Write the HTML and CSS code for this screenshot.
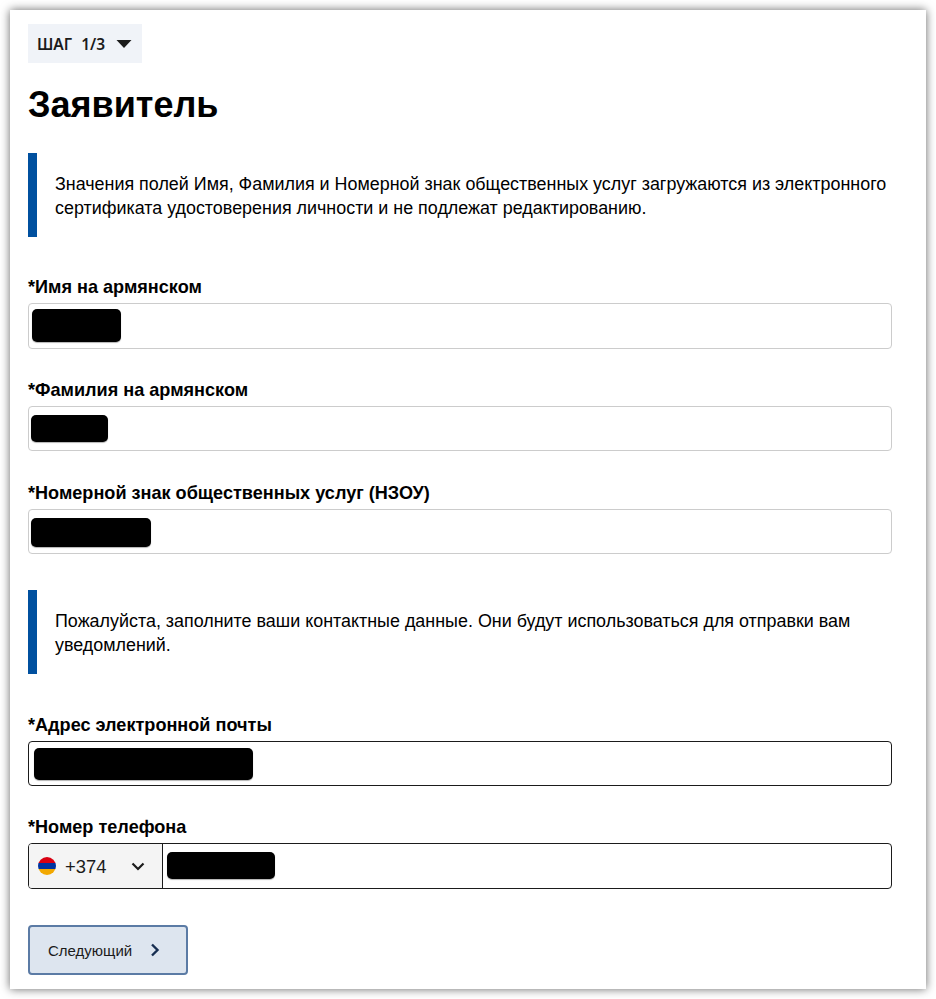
FILE: index.html
```html
<!DOCTYPE html>
<html lang="ru">
<head>
<meta charset="utf-8">
<title>Заявитель</title>
<link rel="stylesheet" href="styles.css">
</head>
<body>
<main class="card">
  <button class="step" type="button">
    <span>ШАГ</span><span>1/3</span>
    <svg class="step-caret" width="16" height="8" viewBox="0 0 16 8"><path d="M0.5 0H15.5L8 8Z" fill="#1b1b1b"/></svg>
  </button>
  <h1 class="title">Заявитель</h1>
  <div class="notice notice-first">Значения полей Имя, Фамилия и Номерной знак общественных услуг загружаются из электронного сертификата удостоверения личности и не подлежат редактированию.</div>
  <div class="field field-first">
    <label class="label">*Имя на армянском</label>
    <div class="input input-tall"><span class="mask mask-a"></span></div>
  </div>
  <div class="field">
    <label class="label">*Фамилия на армянском</label>
    <div class="input"><span class="mask mask-b"></span></div>
  </div>
  <div class="field field-wide">
    <label class="label">*Номерной знак общественных услуг (НЗОУ)</label>
    <div class="input"><span class="mask mask-c"></span></div>
  </div>
  <div class="notice notice-second">Пожалуйста, заполните ваши контактные данные. Они будут использоваться для отправки вам уведомлений.</div>
  <div class="field field-contact">
    <label class="label">*Адрес электронной почты</label>
    <div class="input input-active"><span class="mask mask-d"></span></div>
  </div>
  <div class="field">
    <label class="label">*Номер телефона</label>
    <div class="input input-active input-tall phone">
      <div class="code">
        <svg class="flag" width="18" height="18" viewBox="0 0 18 18">
          <defs><clipPath id="round"><circle cx="9" cy="9" r="9"/></clipPath></defs>
          <g clip-path="url(#round)">
            <rect width="18" height="6" fill="#d90012"/>
            <rect y="6" width="18" height="6" fill="#0033a0"/>
            <rect y="12" width="18" height="6" fill="#f2a800"/>
          </g>
        </svg>
        <span class="code-text">+374</span>
        <svg class="code-caret" width="14" height="9" viewBox="0 0 14 9"><path d="M1.5 1.5L7 7L12.5 1.5" fill="none" stroke="#1b1b1b" stroke-width="2.2"/></svg>
      </div>
      <span class="mask mask-e"></span>
    </div>
  </div>
  <button class="next" type="button">
    <span>Следующий</span>
    <svg width="10" height="14" viewBox="0 0 10 14"><path d="M2 1.5L7.5 7L2 12.5" fill="none" stroke="#162e51" stroke-width="2.4"/></svg>
  </button>
</main>
</body>
</html>
```

FILE: styles.css
```css
* { box-sizing: border-box; }
html, body { margin: 0; background: #fff; }
body {
  padding: 10px;
  height: 999px;
  overflow: hidden;
  font-family: "Liberation Sans", Arial, sans-serif;
  color: #000;
}
.card {
  width: 916px;
  height: 979px;
  padding: 14px 34px 0 18px;
  background: #fff;
  box-shadow: 0 0 9px rgba(0, 0, 0, 0.6);
}
.step {
  display: flex;
  align-items: center;
  gap: 9px;
  width: 114px;
  height: 39px;
  padding: 0 0 0 9px;
  border: 0;
  background: #f0f3f8;
  color: #1b1b1b;
  font: 600 15.5px "Noto Sans", "Open Sans", sans-serif;
}
.step-caret { margin-left: 2px; }
.title {
  margin: 21px 0 0;
  font-size: 36px;
  line-height: 42px;
  font-weight: 700;
}
.notice {
  height: 84px;
  padding: 19px 0 0 18px;
  border-left: 9px solid #00509f;
  font-size: 17.92px;
  line-height: 24px;
}
.notice-first { margin-top: 27px; }
.notice-second { margin-top: 36px; }
.field { margin-top: 31px; }
.field-wide { margin-top: 32px; }
.field-first { margin-top: 40px; }
.field-contact { margin-top: 41px; }
.label {
  display: block;
  height: 20px;
  margin-bottom: 6px;
  font-size: 18.1px;
  line-height: 20px;
  font-weight: 700;
}
.input {
  display: flex;
  align-items: center;
  height: 45px;
  border: 1px solid #ccc;
  border-radius: 4px;
  background: #fff;
}
.input-tall { height: 46px; }
.input-active { border-color: #1b1b1b; }
.mask {
  display: block;
  background: #000;
  border-radius: 5px;
  box-shadow: 0 1px 1px rgba(0, 0, 0, 0.3);
}
.mask-a { width: 89px; height: 33px; margin: 0 0 2px 3px; }
.mask-b { width: 77px; height: 27px; margin-left: 2px; }
.mask-c { width: 120px; height: 29px; margin: 2px 0 0 2px; }
.mask-d { width: 219px; height: 32px; margin-left: 5px; }
.mask-e { width: 108px; height: 27px; margin: 0 0 2px 4px; }
.phone { overflow: hidden; }
.code {
  display: flex;
  align-items: center;
  flex: none;
  width: 134px;
  height: 100%;
  padding-left: 9px;
  background: #f4f4f4;
  border-right: 1px solid #1b1b1b;
}
.code-text {
  margin: 2px 0 0 9px;
  font-size: 18.4px;
  color: #1b1b1b;
}
.code-caret { margin-left: 25px; }
.next {
  display: flex;
  align-items: center;
  gap: 18px;
  width: 160px;
  height: 50px;
  margin-top: 36px;
  padding: 0 0 0 18px;
  border: 2px solid #5b7ba5;
  border-radius: 4px;
  background: #dde5ef;
  color: #1b1b1b;
  font: 400 15px "Liberation Sans", Arial, sans-serif;
}
```
